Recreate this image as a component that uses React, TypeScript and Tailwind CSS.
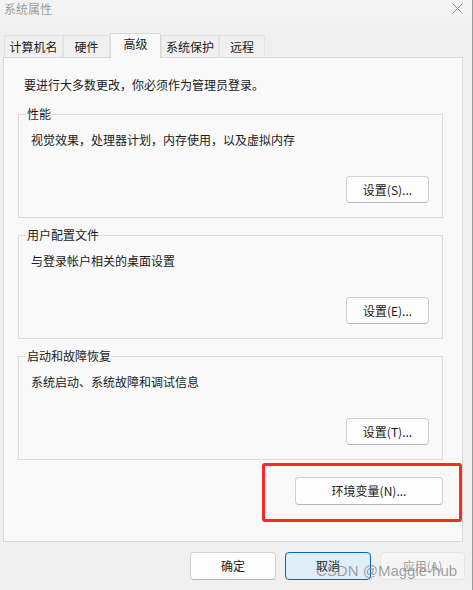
import React from "react";

function Btn({ children, className = "" }: { children: React.ReactNode; className?: string }) {
  return (
    <div
      className={
        "flex items-center justify-center rounded-[4px] border border-[#d0d0d0] border-b-[#b8b8b8] bg-[#fdfdfd] text-[12px] leading-[16px] text-[#1a1a1a] " +
        className
      }
    >
      {children}
    </div>
  );
}

function Group({ label, desc, btn, className = "" }: { label: string; desc: string; btn: string; className?: string }) {
  return (
    <fieldset className={"ml-[14px] w-[425px] border border-[#dcdcdc] " + className}>
      <legend className="ml-[7px] px-[1px] text-[12px] leading-[16px] text-[#1a1a1a]">{label}</legend>
      <div className="mt-[10px] pl-[12px] text-[12px] leading-[16px] text-[#1a1a1a]">{desc}</div>
      <div className="mt-[28px] flex justify-end pb-[14px] pr-[13px]">
        <Btn className="h-[27px] w-[83px]">{btn}</Btn>
      </div>
    </fieldset>
  );
}

const tabs = [
  { t: "计算机名", w: "w-[59px]" },
  { t: "硬件", w: "w-[47px]" },
  { t: "高级", w: "w-[51px]", sel: true },
  { t: "系统保护", w: "w-[58px]" },
  { t: "远程", w: "w-[46px]" },
];

export default function App() {
  return (
    <div className="relative h-[590px] w-[473px] overflow-hidden border-r border-[#9a9a9a] bg-[#f0f0f0] font-['Noto_Sans_CJK_SC','Noto_Sans',sans-serif] text-[#1a1a1a]">
      {/* title bar */}
      <div className="h-[23px] bg-[#f3f3f3]">
        <div className="flex h-[17px] items-center justify-between pl-[4px] pr-[9px]">
          <span className="text-[12px] leading-[16px] text-[#9c9c9c]">系统属性</span>
          <svg width="11" height="11" viewBox="0 0 11 11" className="mt-[-1px]">
            <path d="M0.5 0.5 L10.5 10.5 M10.5 0.5 L0.5 10.5" stroke="#8c8c8c" strokeWidth="1" fill="none" />
          </svg>
        </div>
      </div>

      {/* tabs */}
      <div className="ml-[4px] mt-[10px] flex h-[24px] items-end">
        {tabs.map((tb) =>
          tb.sel ? (
            <div
              key={tb.t}
              className={
                "relative z-10 mb-[-1px] flex h-[25px] justify-center border-x border-t border-[#d9d9d9] bg-[#f9f9f9] pt-[2px] text-[12px] leading-[16px] " +
                tb.w
              }
            >
              {tb.t}
            </div>
          ) : (
            <div
              key={tb.t}
              className={
                "flex h-[22px] items-center justify-center border-x border-t border-[#e2e2e2] bg-[#f0f0f0] text-[12px] leading-[16px] " +
                tb.w
              }
            >
              {tb.t}
            </div>
          )
        )}
      </div>

      {/* panel */}
      <div className="ml-[3px] h-[485px] w-[460px] border border-[#d9d9d9] bg-[#f9f9f9]">
        <div className="pl-[20px] pt-[19px] text-[12px] leading-[16px]">要进行大多数更改，你必须作为管理员登录。</div>
        <Group className="mt-[13px]" label="性能" desc="视觉效果，处理器计划，内存使用，以及虚拟内存" btn="设置(S)..." />
        <Group className="mt-[9px]" label="用户配置文件" desc="与登录帐户相关的桌面设置" btn="设置(E)..." />
        <Group className="mt-[9px]" label="启动和故障恢复" desc="系统启动、系统故障和调试信息" btn="设置(T)..." />
        <div className="mt-[17px] flex justify-end pr-[19px]">
          <div className="relative">
            <Btn className="h-[28px] w-[148px]">环境变量(N)...</Btn>
            <span className="pointer-events-none absolute bottom-[-17px] left-[-33px] right-[-19px] top-[-14px] rounded-[3px] border-[3px] border-[#f52a2a]" />
          </div>
        </div>
      </div>

      {/* bottom buttons */}
      <div className="mt-[10px] flex justify-end gap-[9px] pr-[7px]">
        <Btn className="h-[28px] w-[86px]">确定</Btn>
        <div className="flex h-[28px] w-[86px] items-center justify-center rounded-[4px] border border-[#0067c0] bg-[#e0eef9] text-[12px] leading-[16px]">
          取消
        </div>
        <div className="flex h-[28px] w-[85px] items-center justify-center rounded-[4px] border border-[#e5e5e5] bg-[#f5f5f5] text-[12px] leading-[16px] text-[#a3a3a3]">
          应用(A)
        </div>
      </div>

      {/* watermark */}
      <span className="pointer-events-none absolute left-[316px] top-[563px] whitespace-nowrap font-['Liberation_Sans',sans-serif] text-[15px] leading-[15px] text-[#7a7a7a]/70">
        CSDN @Maggie-hub
      </span>
    </div>
  );
}
